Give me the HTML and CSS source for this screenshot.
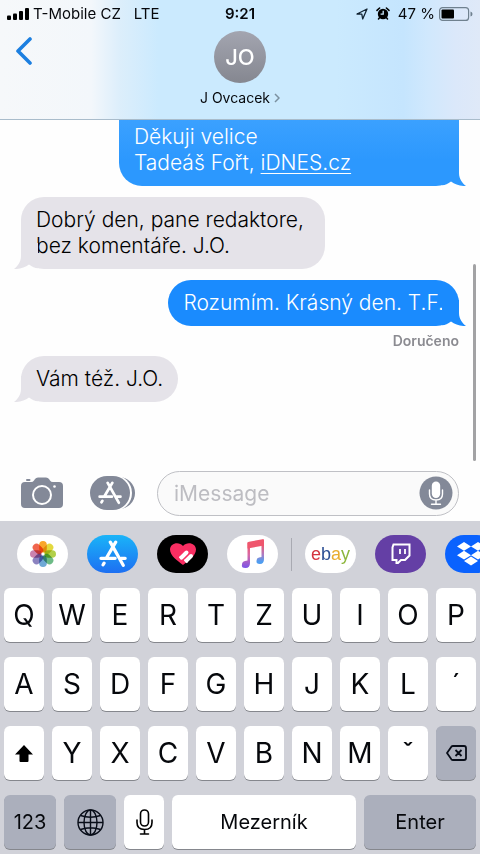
FILE: index.html
```html
<!DOCTYPE html>
<html lang="cs">
<head>
<meta charset="utf-8">
<meta name="viewport" content="width=device-width, initial-scale=1">
<title>J Ovcacek</title>
<link rel="stylesheet" href="styles.css">
</head>
<body>
<svg class="sprite" aria-hidden="true">
  <symbol id="tail" viewBox="0 0 24 26"><path d="M0 0H17V13C17 19 20.500 23.500 24 26C18 26.300 13 24.500 9 21.500C6 24 3 25 0 25.300Z"/></symbol>
  <symbol id="store" viewBox="0 0 26 26">
    <g fill="none" stroke="currentColor" stroke-width="3" stroke-linecap="round">
      <path d="M10.500 2L22.500 23.500M15.500 2L7 16.500M1.800 17H15M20.500 17H24.300M4.700 21.500L3.800 23"/>
    </g>
  </symbol>
</svg>

<header class="top">
  <div class="status">
    <div class="status-left">
      <svg width="22" height="12" viewBox="0 0 22 12" aria-hidden="true"><rect x="0" y="7.500" width="4" height="4.500" rx="1"/><rect x="6" y="5.500" width="4" height="6.500" rx="1"/><rect x="12" y="3" width="4" height="9" rx="1"/><rect x="18" y="0" width="4" height="12" rx="1"/></svg>
      <span>T-Mobile CZ</span><span class="network">LTE</span>
    </div>
    <time class="clock">9:21</time>
    <div class="status-right">
      <svg width="12" height="12" viewBox="0 0 12 12" aria-hidden="true"><path d="M1 6L11 1L6.700 11L5.800 6.200Z" fill="none" stroke="#122433" stroke-width="1.300" stroke-linejoin="round"/></svg>
      <svg class="alarm" width="14" height="13" viewBox="0 0 14 13" aria-hidden="true"><circle cx="7" cy="7" r="5.200"/><path d="M1 3.400L3.600 1M13 3.400L10.400 1M3.500 10.800L2.500 12M10.500 10.800L11.500 12" stroke="#000" stroke-width="1.500" stroke-linecap="round"/><path d="M7.200 3.800V7.200H4.600" fill="none" stroke="#cbe9fe" stroke-width="1.300"/></svg>
      <span>47 %</span>
      <svg width="34" height="14" viewBox="0 0 34 14" aria-hidden="true"><rect x=".6" y=".6" width="29" height="12.800" rx="3" fill="none" stroke="#70818f" stroke-width="1.200"/><rect x="2.500" y="2.500" width="12.500" height="9" rx="1"/><path d="M31.500 4.500Q33.500 5 33.500 7T31.500 9.500Z" fill="#70818f"/></svg>
    </div>
  </div>
  <div class="contact-bar">
    <button class="back" aria-label="Zpět"><svg width="16" height="28" viewBox="0 0 16 28" aria-hidden="true"><path d="M14 2L2 14L14 26" fill="none" stroke="#1c7fe0" stroke-width="3.600" stroke-linecap="round" stroke-linejoin="round"/></svg></button>
    <button class="contact">
      <span class="avatar">JO</span>
      <span class="name">J Ovcacek <svg width="6" height="10" viewBox="0 0 6 10" aria-hidden="true"><path d="M1 1L5 5L1 9" fill="none" stroke="#7b909f" stroke-width="1.500"/></svg></span>
    </button>
  </div>
</header>

<main class="chat">
  <div class="bubble sent first">Děkuji velice<br>Tadeáš Fořt, <a href="#">iDNES.cz</a><svg class="tail" aria-hidden="true"><use href="#tail"/></svg></div>
  <div class="bubble received long">Dobrý den, pane redaktore,<br>bez komentáře. J.O.<svg class="tail" aria-hidden="true"><use href="#tail"/></svg></div>
  <div class="bubble sent">Rozumím. Krásný den. T.F.<svg class="tail" aria-hidden="true"><use href="#tail"/></svg></div>
  <p class="receipt">Doručeno</p>
  <div class="bubble received">Vám též. J.O.<svg class="tail" aria-hidden="true"><use href="#tail"/></svg></div>
  <div class="scroll-thumb"></div>
</main>

<form class="compose">
  <button type="button" aria-label="Fotoaparát"><svg width="42" height="32" viewBox="0 0 42 32" aria-hidden="true"><path d="M4 5H10Q12 5 13 3.500L14 2Q15 .5 17 .5H25Q27 .5 28 2L29 3.500Q30 5 32 5H38Q42 5 42 9V27Q42 31 38 31H4Q0 31 0 27V9Q0 5 4 5Z" fill="#838998"/><rect x="5" y="2" width="4.500" height="2" rx="1" fill="#838998"/><circle cx="21" cy="18" r="9" fill="none" stroke="#fff" stroke-width="2"/><circle cx="33.500" cy="9.500" r="1.300" fill="#fff"/></svg></button>
  <button type="button" class="apps-button" aria-label="Aplikace"><svg width="45" height="34" viewBox="0 0 45 34" aria-hidden="true"><rect x="5" y="1" width="40" height="32" rx="16" fill="#838998"/><rect x="-2" y="-1" width="44" height="36" rx="18" fill="#fff"/><rect x="0" y="0" width="40" height="34" rx="17" fill="#838998"/><use href="#store" x="8" y="5" width="24" height="24" color="#fff"/></svg></button>
  <div class="field">
    <input type="text" placeholder="iMessage" aria-label="iMessage">
    <button type="button" class="dictate" aria-label="Diktovat"><svg width="34" height="34" viewBox="0 0 34 34" aria-hidden="true"><circle cx="17" cy="17" r="16.500" fill="#838998"/><rect x="12.800" y="5.500" width="8.400" height="16.500" rx="4.200" fill="#fff"/><path d="M10.500 14V18Q10.500 24 17 24T23.500 18V14M17 24V28M12.500 28.300H21.500" fill="none" stroke="#fff" stroke-width="1.400" stroke-linecap="round"/></svg></button>
  </div>
</form>

<section class="keyboard" aria-label="Klávesnice">
  <nav class="apps">
    <button class="app photos" aria-label="Fotky"><svg width="28" height="28" viewBox="-14 -14 28 28" aria-hidden="true">
      <g class="petals"><rect x="-3.800" y="-13" width="7.600" height="11.500" rx="3.800" fill="#f9a62b"/><rect x="-3.800" y="-13" width="7.600" height="11.500" rx="3.800" fill="#e3d93f" transform="rotate(45)"/><rect x="-3.800" y="-13" width="7.600" height="11.500" rx="3.800" fill="#b2d04a" transform="rotate(90)"/><rect x="-3.800" y="-13" width="7.600" height="11.500" rx="3.800" fill="#6dbb86" transform="rotate(135)"/><rect x="-3.800" y="-13" width="7.600" height="11.500" rx="3.800" fill="#6fa9d6" transform="rotate(180)"/><rect x="-3.800" y="-13" width="7.600" height="11.500" rx="3.800" fill="#8c83c0" transform="rotate(225)"/><rect x="-3.800" y="-13" width="7.600" height="11.500" rx="3.800" fill="#cb82ae" transform="rotate(270)"/><rect x="-3.800" y="-13" width="7.600" height="11.500" rx="3.800" fill="#f0664e" transform="rotate(315)"/></g></svg></button>
    <button class="app store" aria-label="App Store"><svg width="28" height="28" aria-hidden="true"><use href="#store"/></svg></button>
    <button class="app touch" aria-label="Digital Touch"><svg width="28" height="24" viewBox="0 0 28 24" aria-hidden="true"><path d="M14 23C9 19 1 14 1 7.500C1 1 10 -1 14 4C18 -1 27 1 27 7.500C27 14 19 19 14 23Z" fill="#f92e62"/><path d="M12.500 15.500L17.500 10.500M17.500 18.500L22 14" stroke="#fff" stroke-width="4" stroke-linecap="round"/><path d="M10.500 14.500L13 17M15.500 17.500L18.500 20.500" stroke="#fff" stroke-width="2"/></svg></button>
    <button class="app" aria-label="Hudba"><svg width="24" height="30" viewBox="0 0 24 30" aria-hidden="true"><defs><linearGradient id="note" x1="0" y1="0" x2="0" y2="1"><stop offset=".1" stop-color="#f0566c"/><stop offset=".5" stop-color="#d76aa6"/><stop offset="1" stop-color="#7a55e8"/></linearGradient><linearGradient id="note2" x1="0" y1="0" x2="0" y2="1"><stop offset=".2" stop-color="#f0566c"/><stop offset=".6" stop-color="#b17ac0"/><stop offset=".9" stop-color="#4f9df0"/></linearGradient></defs><path d="M6.500 3.500L9 3V24Q9 29 4.500 29T1 25.500Q1 22.500 4 22L6.500 21.500Z" fill="url(#note)"/><path d="M20.500 1L23 .5V20Q23 25 19 25T15.500 21.800Q15.500 19 18 18.500L20.500 18Z" fill="url(#note2)"/><path d="M6.500 4Q6.500 3 8 2.700L21.500 .2Q23 0 23 1.500V6.500L6.500 9.500Z" fill="#ef566d"/></svg></button>
    <span class="divider"></span>
    <button class="app ebay" aria-label="eBay"><span class="e">e</span><span class="b">b</span><span class="a">a</span><span class="y">y</span></button>
    <button class="app twitch" aria-label="Twitch"><svg width="20" height="22" viewBox="0 0 20 22" aria-hidden="true"><path d="M2.500 1.500H18.500V12.500L14 17H10L7 20H5.500V17H1.500V4.500Z" fill="none" stroke="#fff" stroke-width="2"/><path d="M9 6V11M14 6V11" stroke="#fff" stroke-width="1.800"/></svg></button>
    <button class="app dropbox" aria-label="Dropbox"><svg width="28" height="24" viewBox="0 0 28 24" aria-hidden="true"><path d="M7 0L14 4.400L7 8.800L0 4.400ZM21 0L28 4.400L21 8.800L14 4.400ZM0 13.200L7 8.800L14 13.200L7 17.600ZM21 8.800L28 13.200L21 17.600L14 13.200ZM7 19L14 14.600L21 19L14 23.400Z" fill="#fff"/></svg></button>
  </nav>
  <div class="row"><button>Q</button><button>W</button><button>E</button><button>R</button><button>T</button><button>Z</button><button>U</button><button>I</button><button>O</button><button>P</button></div>
  <div class="row"><button>A</button><button>S</button><button>D</button><button>F</button><button>G</button><button>H</button><button>J</button><button>K</button><button>L</button><button>´</button></div>
  <div class="row"><button aria-label="Shift"><svg width="18" height="17" viewBox="0 0 18 17" aria-hidden="true"><path d="M9 0L18 9.500H13.500V16Q13.500 17 12.500 17H5.500Q4.500 17 4.500 16V9.500H0Z"/></svg></button><button>Y</button><button>X</button><button>C</button><button>V</button><button>B</button><button>N</button><button>M</button><button>ˇ</button><button class="gray" aria-label="Smazat"><svg width="21" height="16" viewBox="0 0 21 16" aria-hidden="true"><path d="M7 1H18Q20 1 20 3V13Q20 15 18 15H7Q6 15 5.400 14.300L1 8L5.400 1.700Q6 1 7 1ZM9.500 5L15.500 11M15.500 5L9.500 11" fill="none" stroke="#080d18" stroke-width="1.800" stroke-linejoin="round"/></svg></button></div>
  <div class="row bottom"><button class="gray">123</button><button class="gray" aria-label="Jazyk"><svg width="27" height="27" viewBox="0 0 27 27" aria-hidden="true"><g fill="none" stroke="#080d18" stroke-width="1.400"><circle cx="13.500" cy="13.500" r="12.500"/><ellipse cx="13.500" cy="13.500" rx="6.500" ry="12.500"/><path d="M13.500 1V26M1 13.500H26M3.500 6.500Q13.500 10 23.500 6.500M3.500 20.500Q13.500 17 23.500 20.500"/></g></svg></button><button aria-label="Diktování"><svg width="17" height="26" viewBox="0 0 17 26" aria-hidden="true"><g fill="none" stroke="#000" stroke-width="1.600" stroke-linecap="round"><rect x="4.500" y="1" width="8" height="16" rx="4"/><path d="M1 11V13.500Q1 20.500 8.500 20.500T16 13.500V11M8.500 20.500V25M4.500 25H12.500"/></g></svg></button><button>Mezerník</button><button class="gray">Enter</button></div>
</section>
</body>
</html>
```
FILE: styles.css
```css
* { box-sizing: border-box; }

body {
  margin: 0;
  height: 100vh;
  display: flex;
  flex-direction: column;
  overflow: hidden;
  background: #fefefe;
  color: #06080c;
  font-family: Inter, "Liberation Sans", sans-serif;
}

button {
  margin: 0;
  padding: 0;
  border: 0;
  background: none;
  color: inherit;
  font: inherit;
}

svg { display: block; flex: none; }
.sprite { position: absolute; width: 0; height: 0; }

/* Header */
.top {
  background: linear-gradient(90deg, #f6f8fa 0%, #f3f7fb 19%, #dceefb 25%, #cbeafe 33%, #cbeafe 70%, #c5e5fe 84%, #d0e8fd 89%, #dbe8fa 95%, #dfe9f8 100%);
  border-bottom: 1px solid #a9bccb;
}

.status {
  display: grid;
  grid-template-columns: 1fr auto 1fr;
  align-items: center;
  height: 27px;
  padding: 0 7px;
  font-size: 15px;
}

.status-left, .status-right { display: flex; align-items: center; gap: 4px; }
.status-right { justify-content: flex-end; }
.alarm { margin: 0 4px; }
.network { margin-left: 9px; }
.clock { font-weight: 600; }

.contact-bar {
  display: grid;
  grid-template-columns: 1fr auto 1fr;
  align-items: start;
  height: 92px;
  padding: 4px 16px;
}

.back { justify-self: start; padding: 6px 0; }
.contact { display: flex; flex-direction: column; align-items: center; gap: 6px; }

.avatar {
  width: 52px;
  height: 52px;
  border-radius: 50%;
  background: linear-gradient(#a3a5b0, #858790);
  color: #fff;
  font-size: 22px;
  font-weight: 500;
  line-height: 52px;
}

.name { display: flex; align-items: center; gap: 4px; font-size: 14px; line-height: 18px; }

/* Conversation */
.chat {
  position: relative;
  flex: 1;
  min-height: 0;
  display: flex;
  flex-direction: column;
  justify-content: flex-end;
  align-items: flex-start;
  padding: 0 21px 59px;
  overflow: hidden;
}

.bubble {
  position: relative;
  flex: none;
  margin-top: 11px;
  padding: 10px 15px;
  border-radius: 23px;
  font-size: 21px;
  font-weight: 300;
  line-height: 26px;
}

.received { background: #e5e3e9; color: #000; fill: #e5e3e9; }
.sent { align-self: flex-end; background: #1a8bfe; color: #fff; fill: #1a8bfe; }

/* Scrolled part-way under the header */
.first {
  width: 340px;
  max-width: 78%;
  border-radius: 0 0 23px 23px;
  background: linear-gradient(#3da2ff, #2c98fe 64%);
  fill: #2c98fe;
}

.long { padding-right: 21px; }
.sent a { color: inherit; text-decoration-thickness: 1px; text-underline-offset: 3px; }

.tail { position: absolute; bottom: 0; width: 24px; height: 26px; }
.sent .tail { right: -7px; }
.received .tail { left: -7px; transform: scaleX(-1); }

.receipt {
  align-self: flex-end;
  flex: none;
  margin: 0 0 -11px;
  font-size: 14px;
  font-weight: 600;
  line-height: 30px;
  color: #8b8b91;
}

.scroll-thumb {
  position: absolute;
  right: 4px;
  bottom: 0;
  width: 3px;
  height: 197px;
  border-radius: 2px;
  background: #a2a2a4;
}

/* Message field */
.compose {
  flex: none;
  display: flex;
  align-items: center;
  height: 60px;
  padding: 4px 21px 0;
}

.apps-button { margin: 0 22px 0 27px; }

.field {
  flex: 1;
  min-width: 0;
  display: flex;
  align-items: center;
  height: 45px;
  padding: 0 5px 0 16px;
  border: 1px solid #bfc0c5;
  border-radius: 23px;
  background: #fafafa;
}

.field input {
  flex: 1;
  min-width: 0;
  padding: 0;
  border: 0;
  outline: 0;
  background: none;
  font: inherit;
  font-size: 21px;
}

.field input::placeholder { color: #bdbdc2; }

/* Keyboard */
.keyboard {
  flex: none;
  display: flex;
  flex-direction: column;
  gap: 15px;
  padding: 14px 4px 5px;
  background: #d1d2d9;
}

.apps { display: flex; align-items: center; gap: 19px; padding-left: 13px; margin-right: -4px; overflow: hidden; }

.app {
  flex: none;
  display: flex;
  align-items: center;
  justify-content: center;
  width: 51px;
  height: 38px;
  border-radius: 19px;
  background: #fff;
}

.petals rect { mix-blend-mode: multiply; }
.store { background: linear-gradient(#1ab4f8, #1d6ff2); color: #fff; }
.touch { background: #000; }
.twitch { background: #643fa5; }
.dropbox { background: #0a62fe; }
.divider { flex: none; width: 1px; height: 33px; margin: 0 -6px; background: #a9aab2; }

.ebay { font-family: "Liberation Sans", sans-serif; font-size: 18px; line-height: 20px; }
.e { color: #d4343f; }
.b { color: #2c4f94; }
.a { color: #e8ad2f; }
.y { color: #8db63c; }

.row { display: grid; grid-template-columns: repeat(10, 1fr); gap: 8px; }

.row button {
  display: flex;
  align-items: center;
  justify-content: center;
  height: 54px;
  border-radius: 6px;
  background: #fff;
  box-shadow: 0 1px 0 #85878d;
  font-size: 28px;
}

.row .gray { background: #abafbc; }
.bottom { grid-template-columns: 13fr 13fr 10fr 46fr 28fr; }
.row.bottom button { font-size: 20px; }
```
